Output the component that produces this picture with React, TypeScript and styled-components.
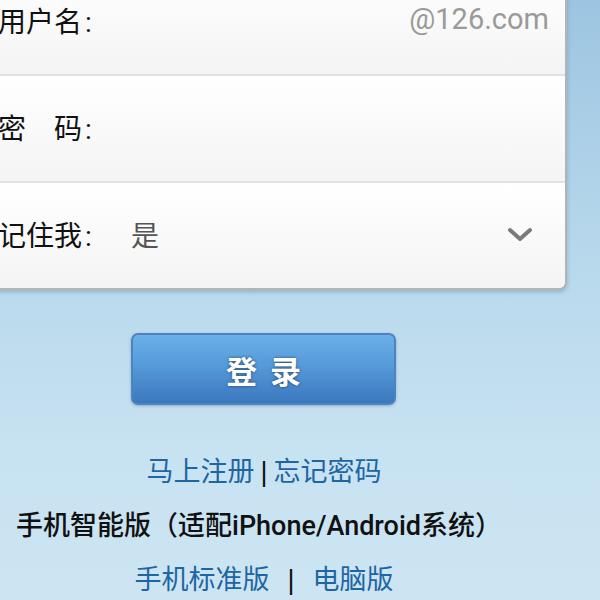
import React from 'react'
import styled, { createGlobalStyle } from 'styled-components'

const GlobalStyle = createGlobalStyle`
    html, body {
        margin: 0;
        padding: 0;
        overflow: hidden;
    }
    body {
        font-family: "Roboto", "Noto Sans CJK SC", sans-serif;
    }
`

const Page = styled.div`
    width: 600px;
    height: 600px;
    overflow: hidden;
    background: linear-gradient(180deg, #9dc5e1 0%, #b6d7eb 40%, #c7e2f1 75%, #cde5f3 100%);
    display: flex;
    flex-direction: column;
`

const Card = styled.div`
    margin: -33px 0 0 -24px;
    width: 587px;
    flex-shrink: 0;
    background: #fafafa;
    border: 2px solid #b4b4b4;
    border-radius: 8px;
    box-shadow: 0 2px 4px rgba(60, 100, 140, 0.35);
    overflow: hidden;
`

const Row = styled.div<{ $last?: boolean }>`
    height: 105px;
    display: flex;
    align-items: center;
    padding: 0 16px 0 20px;
    background: linear-gradient(180deg, #ffffff 0%, #f4f4f4 100%);
    border-bottom: ${(p) => (p.$last ? 'none' : '2px solid #e2e2e2')};
`

const Label = styled.span`
    width: 133px;
    flex-shrink: 0;
    font-size: 28px;
    color: #111;
    white-space: pre;
    margin-top: -3px;
`

const Colon = styled.span`
    margin-left: 3px;
`

const Value = styled.span`
    flex: 1;
    font-size: 28px;
    color: #555;
    margin-top: -3px;
`

const Suffix = styled.span`
    font-size: 29px;
    color: #9a9a9a;
    margin-top: -5px;
`

const Chevron = styled.svg`
    width: 26px;
    height: 16px;
    margin-right: 16px;
    margin-top: -1px;
`

const Actions = styled.div`
    display: flex;
    flex-direction: column;
    padding-top: 43px;
`

const LoginButton = styled.button`
    margin-left: 131px;
    width: 265px;
    height: 72px;
    border: 2px solid #4d84bf;
    border-radius: 7px;
    background: linear-gradient(180deg, #6cb0e8 0%, #559ad9 45%, #3b77be 100%);
    box-shadow: 0 1px 3px rgba(40, 80, 130, 0.35);
    color: #fff;
    font-family: "Noto Sans CJK SC", sans-serif;
    font-weight: 700;
    font-size: 31px;
    letter-spacing: 13px;
    padding: 0 0 0 13px;
    text-shadow: 0 0 3px rgba(0, 0, 0, 0.55);
`

const Links = styled.div`
    width: 528px;
    margin-top: 40px;
    display: flex;
    flex-direction: column;
    align-items: center;
`

const LinkLine = styled.div<{ $shift?: number }>`
    height: 54px;
    line-height: 54px;
    font-size: 27px;
    white-space: pre;
    display: flex;
    margin-left: ${(p) => p.$shift || 0}px;
`

const Link = styled.a`
    color: #1d65a3;
    text-decoration: none;
`

const Sep = styled.span<{ $gap: number }>`
    color: #111;
    font-family: "Liberation Sans", sans-serif;
    margin: 0 ${(p) => p.$gap}px;
`

const Smart = styled.span`
    color: #111;
    font-weight: 500;
`

const App: React.FC = () => {
    return (
        <>
            <GlobalStyle />
            <Page>
                <Card>
                    <Row>
                        <Label>{"用户名"}<Colon>{":"}</Colon></Label>
                        <Value />
                        <Suffix>{"@126.com"}</Suffix>
                    </Row>
                    <Row>
                        <Label>{"密\u3000码"}<Colon>{":"}</Colon></Label>
                        <Value />
                    </Row>
                    <Row $last>
                        <Label>{"记住我"}<Colon>{":"}</Colon></Label>
                        <Value>{"是"}</Value>
                        <Chevron viewBox="0 0 26 16">
                            <path d="M3 3 L13 12 L23 3" fill="none" stroke="#7a7a7a" strokeWidth="4" strokeLinecap="round" strokeLinejoin="round" />
                        </Chevron>
                    </Row>
                </Card>
                <Actions>
                    <LoginButton>{"登录"}</LoginButton>
                    <Links>
                        <LinkLine>
                            <Link>{"马上注册"}</Link>
                            <Sep $gap={6}>{"|"}</Sep>
                            <Link>{"忘记密码"}</Link>
                        </LinkLine>
                        <LinkLine $shift={-10}>
                            <Smart>{"手机智能版（适配iPhone/Android系统）"}</Smart>
                        </LinkLine>
                        <LinkLine>
                            <Link>{"手机标准版"}</Link>
                            <Sep $gap={18}>{"|"}</Sep>
                            <Link>{"电脑版"}</Link>
                        </LinkLine>
                    </Links>
                </Actions>
            </Page>
        </>
    )
}

export default App
